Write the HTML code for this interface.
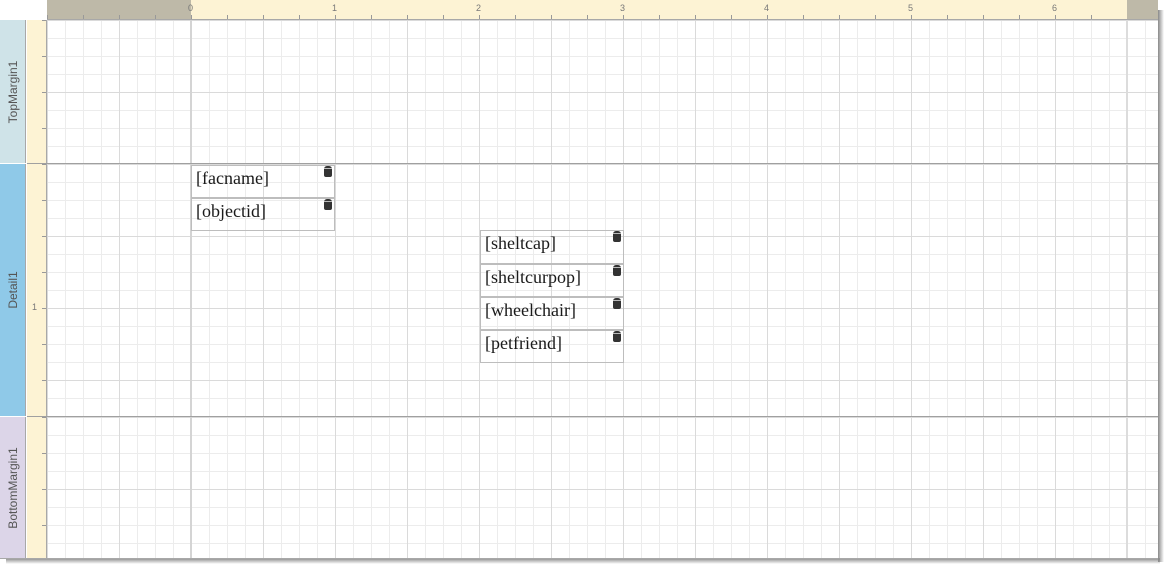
<!DOCTYPE html>
<html><head><style>
body{margin:0;width:1176px;height:568px;background:#fff;position:relative;overflow:hidden;font-family:"Liberation Sans",sans-serif}
.abs{position:absolute}
.grid{background-image:
 linear-gradient(90deg,#dadada 1px,transparent 1px),
 linear-gradient(180deg,#dadada 1px,transparent 1px),
 linear-gradient(90deg,#ececec 1px,transparent 1px),
 linear-gradient(180deg,#ececec 1px,transparent 1px);
 background-size:72px 72px,72px 72px,18px 18px,18px 18px;background-color:#fff}
.band{position:absolute;left:0;width:26px;border-right:1px solid #a8a8a8;box-sizing:border-box}
.band span{position:absolute;left:50%;top:50%;transform:translate(-50%,-50%) rotate(-90deg);font-size:12px;color:#555;white-space:nowrap}
.vr{position:absolute;left:27px;width:19px;background:#fdf3d4;border-right:1px solid #a8a8a8}
.box{position:absolute;border:1px solid #bdbdbd;box-sizing:border-box;background:transparent;font-family:"Liberation Serif",serif;font-size:18px;color:#1a1a1a;padding:2px 0 0 4px;line-height:21px}
.box i{position:absolute;right:2px;top:0px;width:8px;height:11px;background:#333;border-radius:3px 3px 2px 2px}
.box i:before{content:"";position:absolute;left:0;top:2px;width:8px;height:1px;background:#bbb}
.hl{position:absolute;height:1px;background:#a0a0a0;left:27px;width:1131px}
.num{position:absolute;font-size:9px;color:#777}
</style></head><body>
<div class="abs" style="left:47px;top:0;width:144px;height:19px;background:#beb9a8"></div>
<div class="abs" style="left:191px;top:0;width:936px;height:19px;background:#fdf3d4"></div>
<div class="abs" style="left:1127px;top:0;width:31px;height:19px;background:#beb9a8"></div>
<div class="abs" style="left:47px;top:19px;width:1111px;height:1px;background:#a8a8a8"></div>
<div class="abs" style="left:47px;top:15px;width:1080px;height:4px;background-image:linear-gradient(90deg,#999 1px,transparent 1px);background-size:36px 4px"></div>
<div class="num" style="left:188px;top:3px">0</div><div class="num" style="left:332px;top:3px">1</div>
<div class="num" style="left:476px;top:3px">2</div><div class="num" style="left:620px;top:3px">3</div>
<div class="num" style="left:764px;top:3px">4</div><div class="num" style="left:908px;top:3px">5</div>
<div class="num" style="left:1052px;top:3px">6</div>
<div class="band" style="top:20px;height:143px;background:#cfe3e8"><span>TopMargin1</span></div>
<div class="band" style="top:164px;height:252px;background:#8fc9e8"><span>Detail1</span></div>
<div class="band" style="top:417px;height:141px;background:#dcd5e8"><span>BottomMargin1</span></div>
<div class="vr" style="top:20px;height:538px"></div>
<div class="abs" style="left:42px;top:20px;width:4px;height:143px;background-image:linear-gradient(180deg,#999 1px,transparent 1px);background-size:4px 36px"></div>
<div class="abs" style="left:42px;top:164px;width:4px;height:252px;background-image:linear-gradient(180deg,#999 1px,transparent 1px);background-size:4px 36px"></div>
<div class="abs" style="left:42px;top:417px;width:4px;height:141px;background-image:linear-gradient(180deg,#999 1px,transparent 1px);background-size:4px 36px"></div>
<div class="num" style="left:32px;top:302px">1</div>
<div class="abs grid" style="left:47px;top:20px;width:1111px;height:143px"></div>
<div class="abs grid" style="left:47px;top:164px;width:1111px;height:252px"></div>
<div class="abs grid" style="left:47px;top:417px;width:1111px;height:141px"></div>
<div class="abs" style="left:190px;top:20px;width:2px;height:538px;background:#d4d4d4"></div>
<div class="abs" style="left:1126px;top:20px;width:2px;height:538px;background:#dcdcdc"></div>
<div class="hl" style="top:163px"></div>
<div class="hl" style="top:416px"></div>
<div class="abs" style="left:0;top:558px;width:1160px;height:1px;background:#a8a8a8"></div>
<div class="abs" style="left:6px;top:559px;width:1154px;height:5px;background:linear-gradient(#999,rgba(200,200,200,0))"></div>
<div class="abs" style="left:1158px;top:10px;width:6px;height:552px;background:linear-gradient(90deg,#888,rgba(200,200,200,0))"></div>
<div class="box" style="left:191px;top:165px;width:144px;height:33px">[facname]<i></i></div>
<div class="box" style="left:191px;top:198px;width:144px;height:33px">[objectid]<i></i></div>
<div class="box" style="left:480px;top:230px;width:144px;height:34px">[sheltcap]<i></i></div>
<div class="box" style="left:480px;top:264px;width:144px;height:33px">[sheltcurpop]<i></i></div>
<div class="box" style="left:480px;top:297px;width:144px;height:33px">[wheelchair]<i></i></div>
<div class="box" style="left:480px;top:330px;width:144px;height:33px">[petfriend]<i></i></div>
</body></html>
